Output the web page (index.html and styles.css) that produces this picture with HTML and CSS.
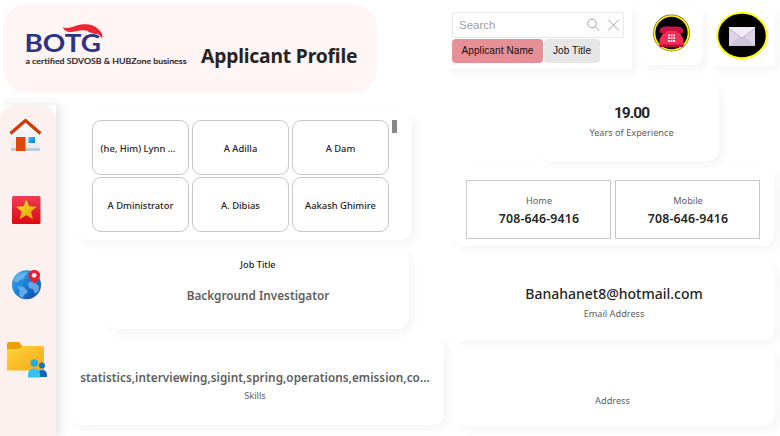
FILE: index.html
```html
<!DOCTYPE html>
<html lang="en">
<head>
<meta charset="utf-8">
<title>Applicant Profile</title>
<link rel="stylesheet" href="styles.css">
</head>
<body>
<div class="page">
  <div class="left">
    <header class="banner">
      <svg class="logo" width="166" height="46" viewBox="0 0 166 46">
        <text class="logo-name" x="-0.500" y="28.300" textLength="76.500" lengthAdjust="spacingAndGlyphs">BOTG</text>
        <path d="M37.500 3.500c5 1 9 0 14-2C60-1 69 0 73 5c4 3 5 6 4 10-1-3-3-5-6-5-3 0-5-2-8-3-6-2-12 1-18 1-3 0-5-1-7.500-4.500z" fill="#ed2630"/>
        <path d="M63 6.500l4 2-3-.300z" fill="#7a2630"/>
        <text class="logo-tag" x="0.500" y="40.200" textLength="161" lengthAdjust="spacingAndGlyphs">a certified SDVOSB &amp; HUBZone business</text>
      </svg>
      <h1>Applicant Profile</h1>
    </header>
    <div class="lower">
      <div class="rail"><nav>
        <svg width="34" height="34" viewBox="0 0 34 34">
          <defs><linearGradient id="wall" x2="0" y2="1"><stop stop-color="#fff"/><stop offset="1" stop-color="#e6e7ea"/></linearGradient><linearGradient id="win" x2="1" y2="1"><stop stop-color="#2fc3f4"/><stop offset="1" stop-color="#1678c8"/></linearGradient></defs>
          <path d="M3 15L17 3l14 12v19H3z" fill="url(#wall)"/><path d="M3 31h29v3H3z" fill="#bccbd8"/>
          <path d="M8 20h9.500v14H8z" fill="#de480d"/><path d="M20.500 20h6.500v6h-6.500z" fill="url(#win)"/>
          <path d="M2.500 16.500L17.500 3.500l15 13" fill="none" stroke="#cc3b08" stroke-width="3.200" stroke-linejoin="round"/>
        </svg>
        <svg width="28" height="28" viewBox="0 0 28 28">
          <defs><linearGradient id="red" x2="0" y2="1"><stop stop-color="#ef3c55"/><stop offset="1" stop-color="#df0712"/></linearGradient><linearGradient id="gold" x2="1" y2="1"><stop stop-color="#f8da30"/><stop offset="1" stop-color="#dda600"/></linearGradient></defs>
          <rect width="28.500" height="28" rx="1.500" fill="url(#red)"/>
          <path d="M14.300 4l2.700 6.500 7 .5-5.400 4.500 1.800 7-6.100-3.800-6 3.800 1.700-7L4.800 11l7-.5z" fill="url(#gold)" stroke="#efc51f" stroke-width=".6"/>
        </svg>
        <svg width="32" height="32" viewBox="0 0 32 32">
          <defs><linearGradient id="sea" x2="1" y2="1"><stop stop-color="#38b9ef"/><stop offset=".5" stop-color="#1c7bd4"/><stop offset="1" stop-color="#0c479b"/></linearGradient></defs>
          <circle cx="15.500" cy="15.700" r="14.500" fill="url(#sea)"/>
          <path d="M3 10Q8 3 17 3l-2 3-2 1 1 2-5 2-3 2-3-1zM6 17l7 1 4 5-4 3-1 3q-3-1-4-3l1-4zM17 14l5-2 6 5q1 5-4 8l-2-5-4-1z" fill="#77b7ee" opacity=".8"/>
          <path d="M23.200 14.500C18.500 10.500 17.300 8.500 17.300 6a5.900 5 0 0 1 11.800 0c0 2.500-1.300 4.500-5.900 8.500z" fill="#ed1c30"/><circle cx="23.200" cy="6.300" r="2.400" fill="#fff2f2"/>
        </svg>
        <svg width="42" height="38" viewBox="0 0 42 38">
          <defs><linearGradient id="fold" x2="1" y2="1"><stop stop-color="#ffd43c"/><stop offset="1" stop-color="#f3a817"/></linearGradient></defs>
          <path d="M1 3q0-2 2-2h10l4 5h18v8H1z" fill="#e9a10b"/><path d="M1 8h12l4-3h19.500q1.500 0 1.500 1.500V29.500H1z" fill="url(#fold)"/>
          <circle cx="36" cy="24.500" r="3" fill="#1073bd"/><path d="M31 36v-2q0-5 5-5t5 5v2z" fill="#0c69b5"/>
          <circle cx="28.300" cy="22" r="3.800" fill="#24a9e2"/><path d="M22 36.500v-3q0-6 6-6t6 6v3z" fill="#36c1f3"/>
        </svg>
      </nav></div>
      <main>
        <section class="card names">
          <div class="name-grid">
            <button class="long">(he, Him) Lynn ...</button><button>A Adilla</button><button>A Dam</button>
            <button>A Dministrator</button><button>A. Dibias</button><button>Aakash Ghimire</button>
          </div>
          <span class="thumb"></span>
        </section>
        <section class="card job"><h2>Job Title</h2><p>Background Investigator</p></section>
        <section class="card skills"><p>statistics,interviewing,sigint,spring,operations,emission,co...</p><span class="label">Skills</span></section>
      </main>
    </div>
  </div>
  <div class="right">
    <div class="tools">
      <section class="card search">
        <div class="field"><span>Search</span>
          <svg width="34" height="14" viewBox="0 0 34 14" fill="none" stroke="#a6a6a6" stroke-width="1"><circle cx="5" cy="5.500" r="4.300"/><path d="M8 8.500l4.500 4.500M21 1.500l11 11M32 1.500l-11 11"/></svg>
        </div>
        <div class="tabs"><span class="tab on">Applicant Name</span><span class="tab">Job Title</span></div>
      </section>
      <section class="card phone">
        <svg width="38" height="38" viewBox="0 0 38 38">
          <circle cx="18.500" cy="19" r="17.500" fill="#000" stroke="#777320" stroke-width="2"/><circle cx="18.500" cy="19" r="17" fill="none" stroke="#fff100" stroke-width="1.700"/>
          <path d="M11.500 17h14l5 8v6q0 1-1 1h-22q-1 0-1-1v-6z" fill="#f42c58"/><path d="M6.500 30.500h24V32l-1 1h-22l-1-1z" fill="#b8103a"/>
          <path d="M6.500 18.500q-1-5.500 6-6h12q7 .5 6 6l-6 1-1-2.500h-10l-1 2.500z" fill="#cb1244"/>
          <path d="M16 20.500v7.500M18.600 20.500v7.500M21.200 20.500v7.500" stroke="#fff" stroke-width="1.700" stroke-dasharray="1.800 1"/>
        </svg>
      </section>
      <section class="card mail">
        <svg width="52" height="48" viewBox="0 0 52 48">
          <ellipse cx="26" cy="23.500" rx="24.700" ry="22.700" fill="#000" stroke="#ff0" stroke-width="2"/>
          <path d="M13 15h26v19H13z" fill="#dcd4e5"/><path d="M13 34l10-9h6l10 9z" fill="#cfc5da"/><path d="M13 15h26v1.500L26 26 13 16.500z" fill="#f1ebf7"/><path d="M13 16.500L26 26l13-9.500" fill="none" stroke="#b3a3bf" stroke-width=".8"/>
        </svg>
      </section>
    </div>
    <section class="card years"><strong>19.00</strong><span class="label">Years of Experience</span></section>
    <section class="card phones">
      <div class="number"><span class="label">Home</span><b>708-646-9416</b></div>
      <div class="number"><span class="label">Mobile</span><b>708-646-9416</b></div>
    </section>
    <section class="card email"><p>Banahanet8@hotmail.com</p><span class="label">Email Address</span></section>
    <section class="card address"><span class="label">Address</span></section>
  </div>
</div>
</body>
</html>
```
FILE: styles.css
```css
* { box-sizing: border-box; }
body { margin: 0; background: #fff; color: #252423; font-family: "Noto Sans", "Open Sans", sans-serif; }
h1, h2, p { margin: 0; }
svg { display: block; flex: none; overflow: visible; }
.page { width: 780px; height: 436px; overflow: hidden; display: grid; grid-template-columns: 447px 333px; }
.card { background: #fff; border-radius: 11px; box-shadow: 4px 4px 8px rgba(0,0,0,.045); display: flex; white-space: nowrap; }
.label { font-size: 9.2px; line-height: 12px; color: #605e5c; }

.banner { margin: 4px 0 0 3px; width: 374px; height: 89px; border-radius: 24px; background: #fff5f4; display: flex; padding: 20px 0 0 22px; }
.logo-name { font: 700 25.5px Lato, sans-serif; fill: #2b3484; }
.logo-tag { font: 600 7.8px Lato, sans-serif; fill: #292527; stroke: #292527; stroke-width: .15px; }
h1 { margin: 18px 0 0 10px; font: 700 19.3px/28px "Noto Sans", sans-serif; letter-spacing: -.18px; white-space: nowrap; }
.lower { display: flex; margin-top: 12px; height: 331px; }
.rail { width: 56px; box-shadow: 4px 0 9px rgba(0,0,0,.11); background: #fff; }
nav { width: 56px; height: 331px; background: #fdf1f0; border-radius: 16px 16px 0 0; padding: 12px 0 0 8px; display: grid; grid-template-rows: 79px 73px 72px 40px; }
nav svg:nth-child(2) { margin: 0 0 0 4px; }
nav svg:nth-child(3) { margin-left: 3px; }
nav svg:nth-child(4) { margin-left: -2px; }
main { display: flex; flex-direction: column; padding: 7px 0 0 14px; }

.names { width: 336px; height: 128px; margin-left: 6px; padding: 8px 0 0 16px; gap: 3px; }
.name-grid { display: grid; grid-template-columns: repeat(3, 97px); grid-auto-rows: 55px; gap: 2px 3px; }
.name-grid button { border: 1px solid #c8c8c8; border-radius: 9px; background: #fff; color: #252423; font: 500 9.4px "Noto Sans", sans-serif; padding: 2px 0 0; }
.name-grid .long { padding-right: 5px; }
.thumb { width: 5px; height: 13px; background: #8a8886; }
.job { width: 304px; height: 79px; margin: 10px 0 0 35px; flex-direction: column; align-items: center; padding: 9px 0 0 2px; }
.job h2 { font: 500 9.2px/12px "Noto Sans", sans-serif; }
.job p { margin-top: 16px; font-size: 11.75px; line-height: 16px; font-weight: 600; color: #605e5c; }
.skills { width: 374px; height: 86px; margin-top: 10px; flex-direction: column; align-items: center; padding: 30px 4px 0 0; }
.skills p { font-size: 11.75px; letter-spacing: .04px; line-height: 16px; font-weight: 600; color: #605e5c; }
.skills .label { margin-top: 5px; }

.right { display: flex; flex-direction: column; }
.tools { display: flex; height: 69px; }
.search { width: 185px; height: 64px; margin-top: 5px; border-radius: 2px; flex-direction: column; padding: 7px 0 0 5px; }
.field { width: 172px; height: 26px; border: 1px solid #e8e8e8; border-radius: 2px; display: flex; align-items: center; justify-content: space-between; padding: 0 2px 0 6px; font: 11.5px "Liberation Sans", sans-serif; color: #a0a0a0; }
.tabs { display: flex; gap: 1px; margin-top: 1px; }
.tab { width: 56px; height: 24px; border-radius: 4px; background: #e6e6e6; color: #111; text-align: center; font: 10px/23px "Liberation Sans", sans-serif; letter-spacing: .1px; }
.on { width: 91px; background: #e68f97; }
.phone { width: 63px; height: 57px; margin: 8px 0 0 8px; border-radius: 8px; padding: 6px 0 0 13px; }
.mail { width: 66px; height: 57px; margin: 9px 0 0 6px; border-radius: 0; padding: 3px 0 0 7px; }
.years { width: 178px; height: 78px; margin: 14px 0 0 94px; flex-direction: column; align-items: center; padding: 20px 0 0 3px; }
.years strong { font: 700 15.5px/20px Roboto, sans-serif; letter-spacing: -1px; }
.years .label { margin-top: 4px; }
.phones { width: 322px; height: 78px; margin: 7px 0 0 5px; padding: 12px 0 0 14px; gap: 4px; }
.number { width: 145px; height: 59px; border: 1px solid #c8c8c8; display: flex; flex-direction: column; align-items: center; padding: 14px 0 0 1px; }
.number b { margin-top: 4px; font-size: 12.3px; letter-spacing: .18px; line-height: 16px; font-weight: 600; }
.email { width: 322px; height: 78px; margin: 16px 0 0 6px; flex-direction: column; align-items: center; padding-top: 22px; }
.email p { font-size: 14px; line-height: 20px; font-weight: 500; }
.email .label { margin-top: 4px; }
.address { width: 322px; height: 78px; margin: 8px 0 0 6px; flex-direction: column; align-items: center; padding: 47px 3px 0 0; }
```
